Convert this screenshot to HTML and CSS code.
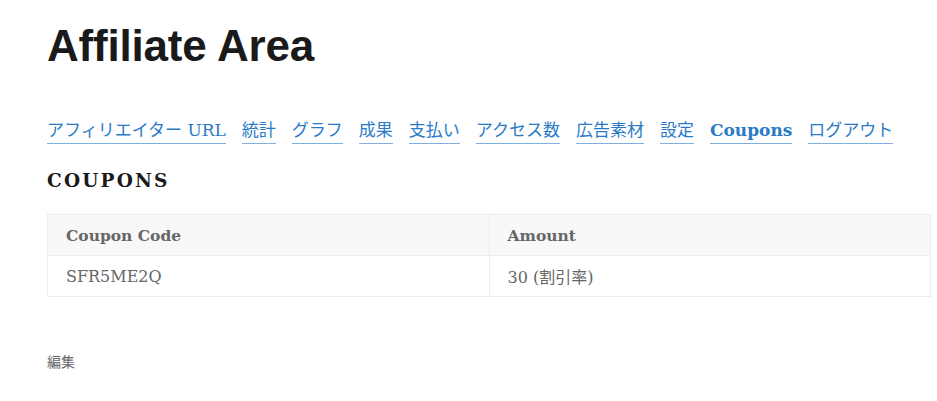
FILE: index.html
```html
<!DOCTYPE html>
<html lang="ja">
<head>
<meta charset="utf-8">
<title>Affiliate Area</title>
<link rel="stylesheet" href="styles.css">
</head>
<body>
<main class="page">
  <h1 class="title">Affiliate Area</h1>
  <nav class="tabs">
    <a href="#">アフィリエイター URL</a>
    <a href="#">統計</a>
    <a href="#">グラフ</a>
    <a href="#">成果</a>
    <a href="#">支払い</a>
    <a href="#">アクセス数</a>
    <a href="#">広告素材</a>
    <a href="#">設定</a>
    <a href="#" class="active">Coupons</a>
    <a href="#">ログアウト</a>
  </nav>
  <h2 class="section">Coupons</h2>
  <table class="coupons">
    <thead>
      <tr><th>Coupon Code</th><th>Amount</th></tr>
    </thead>
    <tbody>
      <tr><td>SFR5ME2Q</td><td>30 (割引率)</td></tr>
    </tbody>
  </table>
  <p class="edit">編集</p>
</main>
</body>
</html>
```
FILE: styles.css
```css
html, body {
  margin: 0;
  padding: 0;
  background: #fff;
}
body {
  font-family: "DejaVu Serif", "Noto Sans CJK JP", serif;
  color: #43454b;
}
.page {
  padding: 24px 0 0 47px;
  width: 884px;
}
.title {
  margin: 0;
  font-family: "Liberation Sans", Arial, sans-serif;
  font-weight: 700;
  font-size: 44px;
  line-height: 44px;
  color: #1a1a1a;
  letter-spacing: -0.2px;
}
.tabs {
  display: flex;
  gap: 16px;
  margin-top: 51px;
}
.tabs a {
  font-size: 17px;
  line-height: 23px;
  color: #2a7ac7;
  text-decoration: none;
  border-bottom: 1px solid #7fb0e0;
  padding-bottom: 1px;
}
.tabs a.active {
  font-weight: 700;
}
.section {
  margin: 25px 0 0;
  font-size: 18.5px;
  line-height: 24px;
  font-weight: 700;
  letter-spacing: 2.2px;
  text-transform: uppercase;
  color: #1a1a1a;
}
.coupons {
  margin-top: 21px;
  width: 100%;
  border-collapse: collapse;
  table-layout: fixed;
  font-size: 16px;
}
.coupons th, .coupons td {
  border: 1px solid #ececec;
  padding: 0 18px;
  height: 40px;
  text-align: left;
  color: #666;
}
.coupons th {
  background: #f8f8f8;
  font-weight: 700;
  font-size: 15.5px;
}
.edit {
  margin: 54px 0 0;
  font-family: "Noto Sans CJK JP", sans-serif;
  font-size: 14px;
  color: #666;
}
```
